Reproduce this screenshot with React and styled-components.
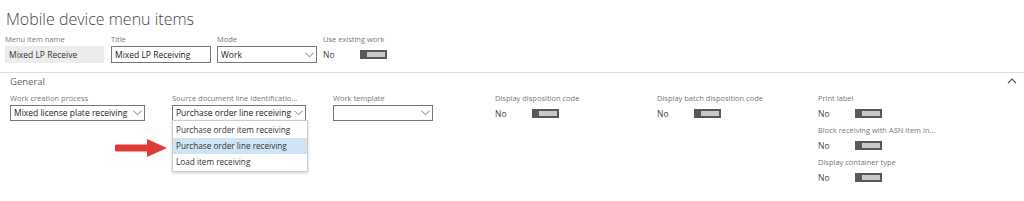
import React from "react";
import styled, { createGlobalStyle } from "styled-components";

const GlobalStyle = createGlobalStyle`
  body {
    margin: 0;
    background: #fff;
    font-family: "Open Sans", "Noto Sans", sans-serif;
    color: #333;
  }
`;

const Page = styled.div`
  width: 1024px;
  height: 201px;
  overflow: hidden;
  position: relative;
`;

const Header = styled.div`
  padding: 8px 0 0 5px;
  height: 64px;
  box-sizing: border-box;
`;

const PageTitle = styled.div`
  font-size: 16px;
  font-weight: 300;
  color: #444;
  line-height: 22px;
  padding-left: 1px;
  margin-bottom: 4px;
`;

const Row = styled.div`
  display: flex;
  gap: ${(p) => p.gap ?? 6}px;
  align-items: flex-start;
`;

const Field = styled.div`
  width: ${(p) => p.width}px;
  flex-shrink: 0;
  position: relative;
`;

const Label = styled.div`
  font-size: 7.5px;
  color: #777;
  line-height: 10px;
  height: 10px;
  white-space: nowrap;
  margin-bottom: 2px;
`;

const ReadOnly = styled.div`
  height: 17px;
  width: ${(p) => p.width}px;
  background: #ececec;
  font-size: 8.5px;
  line-height: 17px;
  padding-left: 4px;
  box-sizing: border-box;
  color: #333;
`;

const Input = styled.div`
  height: ${(p) => p.h || 17}px;
  width: ${(p) => p.width}px;
  border: 1px solid #777;
  box-sizing: border-box;
  font-size: 8.5px;
  line-height: ${(p) => (p.h || 17) - 2}px;
  padding-left: 3px;
  color: #222;
  display: flex;
  align-items: center;
  justify-content: space-between;
  white-space: nowrap;
  overflow: hidden;
  background: #fff;
`;

const Chevron = () => (
  <svg width="9" height="6" viewBox="0 0 9 6" style={{ marginRight: 2, flexShrink: 0 }}>
    <path d="M0.5 0.8 L4.5 4.8 L8.5 0.8" fill="none" stroke="#666" strokeWidth="0.9" />
  </svg>
);

const ToggleRow = styled.div`
  display: flex;
  align-items: center;
  height: 17px;
  font-size: 8.5px;
  color: #444;
`;

const NoText = styled.span`
  width: 37px;
`;

const Toggle = styled.div`
  width: 27px;
  height: 9px;
  background: #585858;
  position: relative;
  &::after {
    content: "";
    position: absolute;
    left: 7px;
    right: 2px;
    top: 2px;
    bottom: 2px;
    background: #c9c9c9;
  }
`;

const Divider = styled.div`
  height: 1px;
  background: #ddd;
  margin: 8px 0 0 0;
`;

const Section = styled.div`
  padding: 2px 0 0 10px;
  position: relative;
`;

const SectionTitle = styled.div`
  font-size: 9.5px;
  color: #666;
  line-height: 13px;
  margin-bottom: 5px;
`;

const Collapse = styled.svg`
  position: absolute;
  right: 7px;
  top: 5px;
`;

const Column = styled.div`
  display: flex;
  flex-direction: column;
  gap: 3px;
`;

const Dropdown = styled.div`
  position: absolute;
  top: 27px;
  left: 0;
  width: 134px;
  border: 1px solid #ccc;
  background: #fff;
  box-shadow: 0 1px 3px rgba(0, 0, 0, 0.2);
  padding: 1px 0;
  z-index: 2;
`;

const Option = styled.div`
  height: 16px;
  line-height: 16px;
  font-size: 8.2px;
  padding-left: 3px;
  color: #333;
  background: ${(p) => (p.selected ? "#cfe3f5" : "#fff")};
  white-space: nowrap;
`;

const Arrow = styled.svg`
  position: absolute;
  left: 114px;
  top: 138px;
  z-index: 3;
`;

function ToggleField({ label, width }) {
  return (
    <Field width={width}>
      <Label>{label}</Label>
      <ToggleRow>
        <NoText>No</NoText>
        <Toggle />
      </ToggleRow>
    </Field>
  );
}

export default function App() {
  return (
    <Page>
      <GlobalStyle />
      <Header>
        <PageTitle>Mobile device menu items</PageTitle>
        <Row>
          <Field width={100}>
            <Label>Menu item name</Label>
            <ReadOnly width={99}>Mixed LP Receive</ReadOnly>
          </Field>
          <Field width={100}>
            <Label>Title</Label>
            <Input width={100}>Mixed LP Receiving</Input>
          </Field>
          <Field width={100}>
            <Label>Mode</Label>
            <Input width={100}>
              Work
              <Chevron />
            </Input>
          </Field>
          <ToggleField label="Use existing work" width={100} />
        </Row>
      </Header>
      <Divider />
      <Section>
        <SectionTitle>General</SectionTitle>
        <Collapse width="10" height="6" viewBox="0 0 10 6">
          <path d="M1 5 L5 1 L9 5" fill="none" stroke="#555" strokeWidth="1.2" />
        </Collapse>
        <Row gap={0}>
          <Field width={162}>
            <Label>Work creation process</Label>
            <Input width={135} h={16}>
              Mixed license plate receiving
              <Chevron />
            </Input>
          </Field>
          <Field width={161}>
            <Label>Source document line identificatio...</Label>
            <Input width={134} h={16}>
              Purchase order line receiving
              <Chevron />
            </Input>
            <Dropdown>
              <Option>Purchase order item receiving</Option>
              <Option selected>Purchase order line receiving</Option>
              <Option>Load item receiving</Option>
            </Dropdown>
          </Field>
          <Field width={162}>
            <Label>Work template</Label>
            <Input width={100} h={16}>
              <span />
              <Chevron />
            </Input>
          </Field>
          <ToggleField label="Display disposition code" width={162} />
          <ToggleField label="Display batch disposition code" width={161} />
          <Column>
            <ToggleField label="Print label" width={150} />
            <ToggleField label="Block receiving with ASN item in..." width={150} />
            <ToggleField label="Display container type" width={150} />
          </Column>
        </Row>
      </Section>
      <Arrow width="54" height="20" viewBox="0 0 54 20">
        <path d="M1 7.5 Q1 6.5 3 6.5 L33 6.5 L33 1 L53 10 L33 19 L33 13.5 L3 13.5 Q1 13.5 1 12.5 Z" fill="#e23b36" />
      </Arrow>
    </Page>
  );
}
